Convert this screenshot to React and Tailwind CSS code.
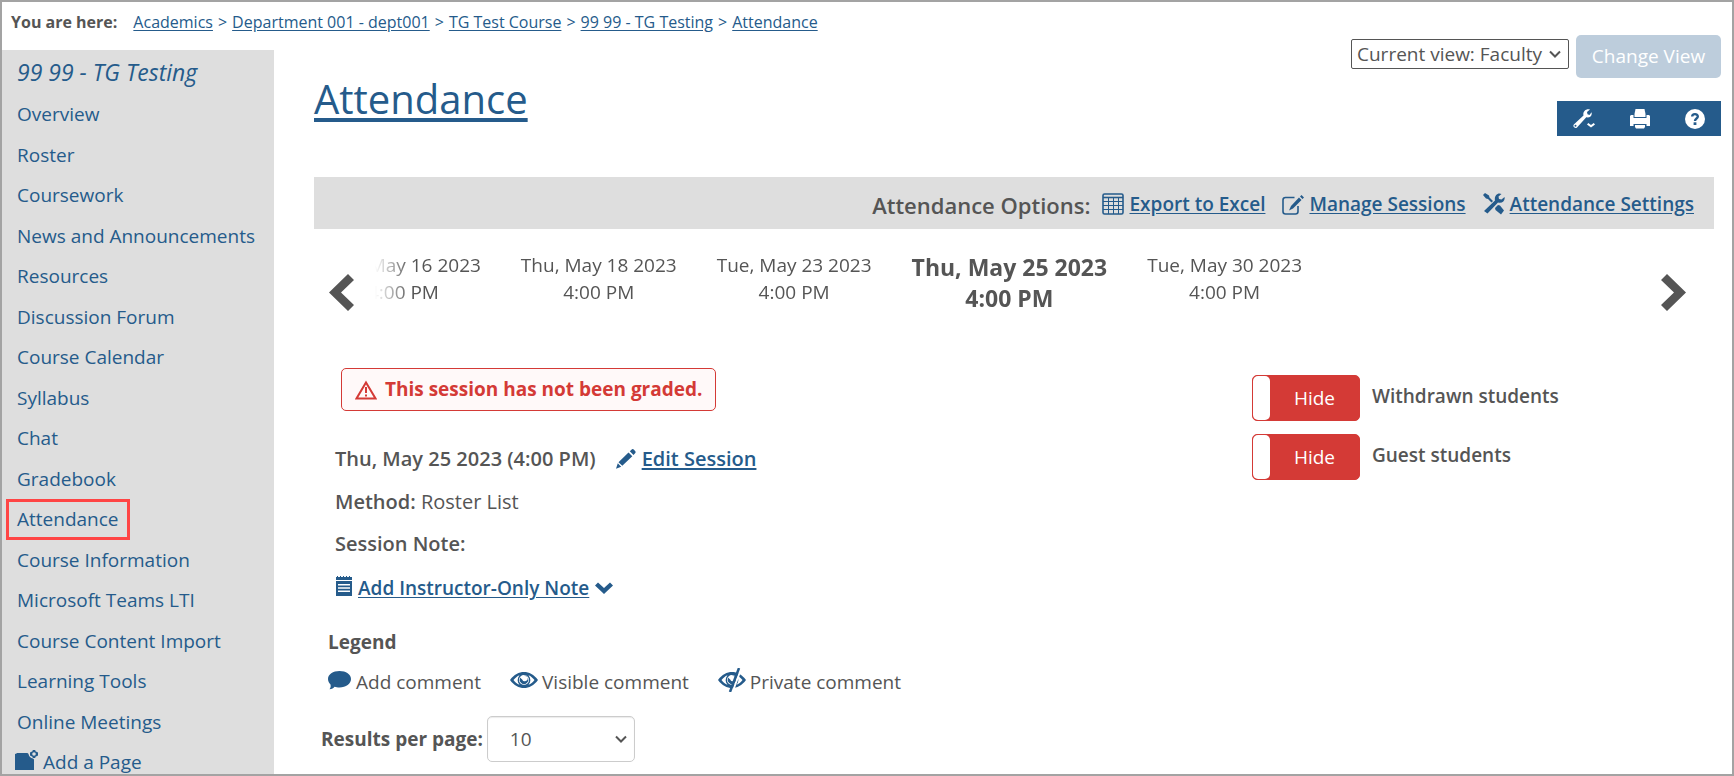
import React, { useState } from 'react';

const breadcrumbs = [
  'Academics',
  'Department 001 - dept001',
  'TG Test Course',
  '99 99 - TG Testing',
  'Attendance',
];

const pages = [
  'Overview',
  'Roster',
  'Coursework',
  'News and Announcements',
  'Resources',
  'Discussion Forum',
  'Course Calendar',
  'Syllabus',
  'Chat',
  'Gradebook',
  'Attendance',
  'Course Information',
  'Microsoft Teams LTI',
  'Course Content Import',
  'Learning Tools',
  'Online Meetings',
];

const sessions = [
  { date: 'Tue, May 16 2023', time: '4:00 PM' },
  { date: 'Thu, May 18 2023', time: '4:00 PM' },
  { date: 'Tue, May 23 2023', time: '4:00 PM' },
  { date: 'Thu, May 25 2023', time: '4:00 PM' },
  { date: 'Tue, May 30 2023', time: '4:00 PM' },
];

// --- MAIN COMPONENT ---
export default function AttendancePage() {
  const [current, setCurrent] = useState(3);

  return (
    <div className="flex min-h-screen flex-col border-2 border-[#a3a3a3] bg-white font-['Open_Sans',sans-serif] text-[19px] leading-7 text-[#555]">
      {/* Breadcrumb */}
      <nav aria-label="Breadcrumb" className="flex h-12 items-start pl-[9px] pt-2 text-base leading-6">
        <span className="mr-4 font-bold">You are here:</span>
        <ol className="flex">
          {breadcrumbs.map((crumb, i) => (
            <li key={crumb} className="flex text-[#255b8b]">
              {i > 0 && <span className="mx-[5px]">&gt;</span>}
              <a href="#" className="underline underline-offset-2">{crumb}</a>
            </li>
          ))}
        </ol>
      </nav>

      <div className="flex flex-1">
        <Sidebar />

        <main className="min-w-0 flex-1 pl-10 pr-[11px]">
          {/* Title and page tools */}
          <div className="flex items-start justify-between">
            <h1 className="mt-[25px] text-[40px] leading-12">
              <a href="#" className="text-[#255b8b] underline decoration-4 underline-offset-4">Attendance</a>
            </h1>
            <div className="-mt-[15px] flex flex-col items-end gap-[23px]">
              <div className="flex items-start gap-[7px]">
                <div className="relative mt-1">
                  <select
                    aria-label="Current view"
                    className="block h-[30px] w-[218px] appearance-none rounded-[2px] border border-[#555] bg-white pl-[5px] leading-6"
                  >
                    <option>Current view: Faculty</option>
                  </select>
                  <SelectArrow />
                </div>
                <button disabled className="h-[43px] w-[145px] rounded-[5px] bg-[#bdcddc] pb-[2px] text-white">
                  Change View
                </button>
              </div>
              <div className="flex h-[35px] w-[164px] items-center justify-between bg-[#255b8b] px-4 text-white">
                <button aria-label="Page options"><WrenchMenuIcon /></button>
                <button aria-label="Print"><PrinterIcon /></button>
                <button aria-label="Help"><HelpIcon /></button>
              </div>
            </div>
          </div>

          {/* Attendance options */}
          <section className="mr-[7px] mt-[41px] flex h-[52px] items-center justify-end bg-[#dedede] pr-5 pt-[2px] font-semibold">
            <h2 className="mr-3 pt-[2px] text-[22px]">Attendance Options:</h2>
            <div className="flex gap-[17px]">
              <OptionLink icon={<TableIcon />} label="Export to Excel" />
              <OptionLink icon={<EditIcon />} label="Manage Sessions" />
              <OptionLink icon={<ToolsIcon />} label="Attendance Settings" />
            </div>
          </section>

          {/* Session picker */}
          <div className="mr-[7px] mt-[23px] flex h-[63px] items-start pl-[15px] pr-7">
            <button
              aria-label="Previous session"
              className="mt-[22px]"
              onClick={() => setCurrent(Math.max(0, current - 1))}
            >
              <Arrow points="19,0 25,6 12,18.500 25,31 19,37 0,18.500" />
            </button>
            <div className="ml-[21px] flex-1 overflow-hidden [mask-image:linear-gradient(to_right,transparent,black_36px)]">
              <ul className="-ml-[49px] flex gap-10 whitespace-nowrap">
                {sessions.map((s, i) => (
                  <li key={s.date}>
                    <button
                      onClick={() => setCurrent(i)}
                      className={i === current ? 'text-[23px] font-bold leading-[31px]' : 'leading-[27px]'}
                    >
                      {s.date}
                      <br />
                      {s.time}
                    </button>
                  </li>
                ))}
              </ul>
            </div>
            <button
              aria-label="Next session"
              className="mt-[22px]"
              onClick={() => setCurrent(Math.min(sessions.length - 1, current + 1))}
            >
              <Arrow points="6,0 0,6 13,18.500 0,31 6,37 25,18.500" />
            </button>
          </div>

          {/* Session details */}
          <div className="mr-[7px] mt-[53px] flex justify-between">
            <div className="pl-[21px] text-[20px]">
              <div className="flex">
                <div role="alert" className="ml-[6px] flex h-[43px] items-center rounded-[5px] border border-[#d43a36] bg-[#fff9f9] px-[13px] text-[19px] font-bold text-[#d43a36]">
                  <WarningIcon />
                  <span className="ml-2 pb-px">This session has not been graded.</span>
                </div>
              </div>
              <div className="mt-[34px] flex items-center font-semibold">
                Thu, May 25 2023 (4:00 PM)
                <a href="#" className="ml-5 flex items-center gap-[6px] text-[#255b8b]">
                  <PencilIcon />
                  <span className="underline decoration-2 underline-offset-2">Edit Session</span>
                </a>
              </div>
              <p className="mt-[15px]"><span className="font-semibold">Method:</span> Roster List</p>
              <p className="mt-[14px] font-semibold">Session Note:</p>
              <button className="mt-4 flex items-center text-[19px] font-semibold text-[#255b8b]">
                <NoteIcon />
                <span className="ml-[6px] underline underline-offset-2">Add Instructor-Only Note</span>
                <svg width="18" height="12" viewBox="0 0 18 12" className="ml-[6px] fill-current">
                  <path d="M0 3.500 3 0.500 9 6 15 0.500 18 3.500 9 12Z" />
                </svg>
              </button>
            </div>
            <div className="flex w-[33%] flex-col gap-[13px] pt-[7px]">
              <Toggle label="Withdrawn students" />
              <Toggle label="Guest students" />
            </div>
          </div>

          {/* Legend */}
          <section className="mt-[26px] pl-[14px]">
            <h3 className="font-bold">Legend</h3>
            <ul className="mt-3 flex">
              <li className="flex items-center"><CommentIcon /><span className="ml-[5px] mr-[29px]">Add comment</span></li>
              <li className="flex items-center"><EyeIcon /><span className="ml-1 mr-[29px]">Visible comment</span></li>
              <li className="flex items-center"><EyeIcon slashed /><span className="ml-1">Private comment</span></li>
            </ul>
          </section>

          <div className="mt-5 flex items-center pl-[7px]">
            <label htmlFor="results" className="font-bold">Results per page:</label>
            <div className="relative ml-1">
              <select
                id="results"
                className="block h-[46px] w-[148px] appearance-none rounded-[5px] border border-[#ccc] bg-white pl-[22px] shadow-[inset_0_1px_1px_rgba(0,0,0,0.08)]"
              >
                <option>10</option>
                <option>25</option>
                <option>50</option>
              </select>
              <SelectArrow />
            </div>
          </div>
        </main>
      </div>
    </div>
  );
}

// --- SUB-COMPONENTS ---
function Sidebar() {
  return (
    <aside className="flex w-[272px] shrink-0 flex-col bg-[#dedede] pl-[15px] text-[#255b8b]">
      <h2 className="h-[52px] pt-2 text-[23px] italic leading-7">
        <a href="#">99 99 - TG Testing</a>
      </h2>
      <ul className="flex flex-1 flex-col justify-between whitespace-nowrap leading-6">
        {pages.map((page) => (
          <li key={page} className="flex">
            <a href="#" className="relative">
              {page}
              {page === 'Attendance' && (
                <span className="absolute -bottom-[9px] -left-[11px] -right-[11px] -top-2 border-3 border-[#ff4545]" />
              )}
            </a>
          </li>
        ))}
        <li>
          <a href="#" className="flex items-start">
            <AddPageIcon />
            <span className="ml-1">Add a Page</span>
          </a>
        </li>
      </ul>
    </aside>
  );
}

function OptionLink({ icon, label }) {
  return (
    <a href="#" className="flex items-center gap-[5px] text-[#255b8b]">
      {icon}
      <span className="underline underline-offset-2">{label}</span>
    </a>
  );
}

function Toggle({ label }) {
  const [shown, setShown] = useState(false);
  return (
    <label className="flex items-center gap-3 font-semibold">
      <input type="checkbox" className="sr-only" checked={shown} onChange={() => setShown(!shown)} />
      <span className="flex h-[46px] w-[108px] rounded-[5px] border border-[#d43a36] bg-[#d43a36] font-normal text-white">
        <span className="w-[17px] rounded-[5px] bg-white" />
        <span className="flex-1 self-center text-center">{shown ? 'Show' : 'Hide'}</span>
      </span>
      <span className="pb-1">{label}</span>
    </label>
  );
}

function SelectArrow() {
  return (
    <svg
      width="12"
      height="8"
      viewBox="0 0 12 8"
      className="pointer-events-none absolute right-2 top-1/2 -translate-y-1/2 fill-none stroke-[#555] stroke-2"
    >
      <path d="M1 1.500 6 6.500 11 1.500" />
    </svg>
  );
}

function Arrow({ points }) {
  return (
    <svg width="25" height="37" viewBox="0 0 25 37" className="fill-[#555]">
      <polygon points={points} />
    </svg>
  );
}

// --- ICONS ---
function WrenchMenuIcon() {
  return (
    <svg width="22" height="20" viewBox="0 0 22 20" className="fill-current">
      <path fillRule="evenodd" d="M17 0.500 14 3 14.500 5.200 16.500 6 18.500 3.300C19.500 6.500 17 9 13.300 8.300L4 18.500C2.500 20 -.8 18 .8 15.500L10.500 6.500C9.500 2.500 13 -.8 17 .5ZM2.500 15.800A1 1 0 1 0 2.500 17.800 1 1 0 1 0 2.500 15.800Z" />
      <path d="M14 15.500 15.300 14 18 16 20.700 14 22 15.500 18 18.500Z" />
    </svg>
  );
}

function PrinterIcon() {
  return (
    <svg width="20" height="20" viewBox="0 0 20 20" className="fill-current">
      <path d="M5.500 0H14.500L15.500 5V8H4.500V5Z" />
      <path fillRule="evenodd" d="M1 6H3.500V9H16.500V6H19L20 7V17H16.500V15H3.500V17H0V7Z" />
      <path d="M5 16H15V18L14 19.500H6L5 18Z" />
    </svg>
  );
}

function HelpIcon() {
  return (
    <svg width="20" height="20" viewBox="0 0 20 20">
      <circle cx="10" cy="10" r="10" className="fill-current" />
      <path d="M7.200 7.600C7.200 4.300 12.800 4.300 12.800 7.400 12.800 9.600 10 9.300 10 12" fill="none" stroke="#255b8b" strokeWidth="2.400" />
      <rect x="8.600" y="13.300" width="2.800" height="2.700" fill="#255b8b" />
    </svg>
  );
}

function TableIcon() {
  return (
    <svg width="22" height="22" viewBox="0 0 22 22" className="fill-none stroke-current">
      <rect x="1" y="1" width="20" height="20" rx="1.500" strokeWidth="1.600" />
      <path d="M1 4.500H21" strokeWidth="1.600" />
      <path d="M1 8.500H21M1 12.500H21M1 16.500H21M6.500 5V21M11.500 5V21M16.500 5V21" />
    </svg>
  );
}

function EditIcon() {
  return (
    <svg width="22" height="22" viewBox="0 0 22 22" className="fill-current">
      <path d="M12.500 4.500H3.500Q1 4.500 1 7V18.500Q1 21 3.500 21H13.500Q16 21 16 18.500V13" fill="none" stroke="currentColor" strokeWidth="1.600" />
      <path d="M17 4.500 19.500 7 11 15.500 7 17.500 9 13ZM18 3.500 19.500 2 22 4.500 20.500 6Z" />
    </svg>
  );
}

function ToolsIcon() {
  return (
    <svg width="22" height="22" viewBox="0 0 22 22" className="fill-current">
      <path d="M0 2 2 0 6 2.500 6.500 4.500 10 8 8.500 9.500 5 6 3 5.500ZM12 15 15 12 17 12.500 21 17.500 18 21.500 12.500 17Z" />
      <path d="M18.500 1 15.500 3.500 16 6 18.500 6.500 21.500 4C22.500 8 19 10.800 15 9.500L4.500 20.500 1 18 12 7.500C11 3 14.500 -1 18.500 1Z" />
    </svg>
  );
}

function WarningIcon() {
  return (
    <svg width="22" height="20" viewBox="0 0 22 20" className="fill-none stroke-current">
      <path d="M11 2.500 20.500 18.500H1.500Z" strokeWidth="2" />
      <path d="M11 7V13M11 14.500V16.500" strokeWidth="2" />
    </svg>
  );
}

function PencilIcon() {
  return (
    <svg width="20" height="20" viewBox="0 0 20 20" className="fill-current">
      <path d="M12.500 3.500 16.300 7.300 6.300 16.800 2.500 13.200ZM13.800 2.300 16 .3Q17 -.3 18 .8L19.300 2.200Q20 3 19.300 4L17.500 6ZM1.800 14.300 5.200 17.700 0 19.800Z" />
    </svg>
  );
}

function NoteIcon() {
  return (
    <svg width="16" height="20" viewBox="0 0 16 20" className="mb-1 ml-px fill-current">
      <path d="M0 1H1V0H2V1H4V0H5V1H7V0H8V1H10V0H11V1H13V0H14V1H16V4H0Z" />
      <path fillRule="evenodd" d="M0 5H16V20H0ZM2 8V9.500H14V8ZM2 11.300V12.800H14V11.300ZM2 14.500V16H14V14.500Z" />
    </svg>
  );
}

function CommentIcon() {
  return (
    <svg width="23" height="19" viewBox="0 0 23 19" className="mb-1 fill-current text-[#255b8b]">
      <path d="M11.500 0C18 0 23 3.500 23 8S18 16.500 11.500 16.500C9.500 16.500 8 16.200 6.500 15.700 5.500 17 4 18 1.500 18.300 2.500 17 3 15.500 2.500 13.500 1 12 0 10.300 0 8 0 3.500 5 0 11.500 0Z" />
    </svg>
  );
}

function EyeIcon({ slashed }) {
  return (
    <svg width="28" height="24" viewBox="0 0 28 24" className="mb-1 fill-current text-[#255b8b]">
      <path fillRule="evenodd" d="M0 12C4 6.500 9 4 14 4S24 6.500 28 12C24 17.500 19 20 14 20S4 17.500 0 12ZM3.500 12C5.500 14.500 7 16 9.500 16.800 7 14 7 10.500 9.500 7.300 7 8.300 5.500 9.800 3.500 12ZM24.500 12C22.500 9.800 21 8.300 18.500 7.300 21 10.500 21 14 18.500 16.800 21 16 22.500 14.500 24.500 12ZM14 7A5 5 0 1 0 14 17 5 5 0 1 0 14 7Z" />
      <path d="M10.500 9.500A4.200 4.200 0 1 0 17.500 9.500C17 8.500 15.500 7.800 14 7.800A2.800 2.800 0 1 1 12.200 11.500C11.500 11.200 11 10.500 10.500 9.500Z" />
      {slashed && (
        <>
          <path d="M23 1 14.500 24" stroke="white" strokeWidth="2" />
          <path d="M21 0 12 24" stroke="currentColor" strokeWidth="2.500" />
        </>
      )}
    </svg>
  );
}

function AddPageIcon() {
  return (
    <svg width="24" height="20" viewBox="0 0 24 20" className="-ml-[2px] fill-current">
      <path d="M0 4 1.500 3.500 2 3H12Q13 3 13.500 4C14 6.500 15.500 8 18 8.500L19 9.500V20H0Z" />
      <path fillRule="evenodd" d="M17.800 0H20.200L20.500 1.300 23 2.500V5.500L20.500 6.700 20.200 8H17.800L17.500 6.700 15 5.500V2.500L17.500 1.300ZM19 2.200A1.800 1.800 0 1 0 19 5.800 1.800 1.800 0 1 0 19 2.200Z" />
    </svg>
  );
}
